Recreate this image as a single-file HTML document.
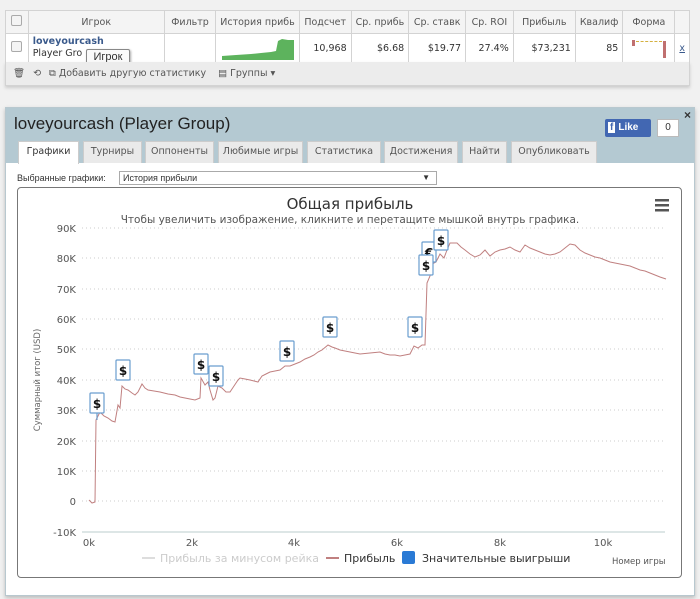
<!DOCTYPE html>
<html><head><meta charset="utf-8"><style>
*{box-sizing:border-box}
body{margin:0;width:700px;height:599px;background:#f1f1f1;font-family:"Liberation Sans",sans-serif;position:relative;overflow:hidden;color:#333}
.a{position:absolute}
table{border-collapse:collapse;font-size:10px;position:absolute;left:5px;top:10px;width:685px;background:#fff}
td{border:1px solid #d3d3d3;padding:0 4px;white-space:nowrap;overflow:hidden;font-family:"DejaVu Sans",sans-serif;font-size:9.5px}
tr.h td{height:23px;background:#f4f4f4;color:#555;text-align:center}
tr.d td{height:29px;text-align:right;color:#333}
.cb{width:11px;height:11px;border:1px solid #aaa;border-radius:2px;background:#f4f4f4;display:inline-block}
.tab{position:absolute;top:141px;height:22px;background:#eaeaea;border:1px solid #ccc;border-bottom:none;font-size:9.5px;font-family:"DejaVu Sans",sans-serif;color:#555;text-align:center;line-height:20px}
</style></head><body>
<table>
<tr class="h"><td style="width:23px"><span class="cb"></span></td><td style="width:142px">Игрок</td><td style="width:52px">Фильтр</td><td style="width:83px">История прибь</td><td style="width:52px">Подсчет</td><td style="width:53px">Ср. прибь</td><td style="width:57px">Ср. ставк</td><td style="width:48px">Ср. ROI</td><td style="width:63px">Прибыль</td><td style="width:44px">Квалиф</td><td style="width:53px">Форма</td><td></td></tr>
<tr class="d"><td style="text-align:center"><span class="cb"></span></td><td style="text-align:left;line-height:12px"><b style="color:#3a5a8c">loveyourcash</b><br>Player Gro</td><td></td><td style="position:relative"><svg width="83" height="29" style="position:absolute;left:0;top:0"><polygon fill="#5db35d" points="6,26 6,22 20,21 35,20 45,19 55,18 60,17 62,7 66,5 72,6 78,6 78,26"/></svg></td><td>10,968</td><td>$6.68</td><td>$19.77</td><td>27.4%</td><td>$73,231</td><td>85</td><td style="position:relative"><div class="a" style="left:9px;top:6px;width:3px;height:6px;background:#c07070"></div><div class="a" style="left:13px;top:7px;width:26px;border-top:1px dashed #d4b040"></div><div class="a" style="left:40px;top:7px;width:3px;height:17px;background:#c07070"></div></td><td style="text-align:center;color:#3a5a8c;text-decoration:underline">x</td></tr>
</table>
<div class="a" style="left:86px;top:49px;width:44px;height:17px;border:1px solid #888;background:#fafafa;font-size:11px;line-height:15px;text-align:center;border-radius:2px;box-shadow:1px 1px 2px #aaa">Игрок</div>
<div class="a" style="left:5px;top:62px;width:685px;height:24px;background:#ececec;border:1px solid #d3d3d3;border-top:none;font-size:9.5px;font-family:'DejaVu Sans',sans-serif;color:#555;line-height:24px;box-shadow:0 2px 3px #ccc">
<span style="margin-left:7px">🗑</span><span style="margin-left:8px">⟲</span><span style="margin-left:8px">⧉ Добавить другую статистику</span><span style="margin-left:12px">▤ Группы ▾</span></div>

<div class="a" style="left:5px;top:107px;width:690px;height:489px;background:#fff;border:1px solid #b8c8cf;box-shadow:0 2px 4px #bbb"></div>
<div class="a" style="left:6px;top:108px;width:688px;height:55px;background:#b4c9d2"></div>
<div class="a" style="left:14px;top:114px;font-size:17px;color:#222">loveyourcash (Player Group)</div>
<div class="a" style="left:605px;top:119px;width:46px;height:18px;background:#4267b2;color:#fff;font-size:10px;font-weight:bold;line-height:18px;border-radius:2px"><span style="background:#fff;color:#4267b2;padding:0 2px;margin:0 3px">f</span>Like</div>
<div class="a" style="left:657px;top:119px;width:22px;height:18px;background:#fff;border:1px solid #bbb;font-size:10px;text-align:center;line-height:16px">0</div>
<div class="a" style="left:684px;top:108px;font-size:12px;font-weight:bold">×</div>
<div class="tab" style="left:18px;width:61px;background:#fff;height:23px;color:#333">Графики</div>
<div class="tab" style="left:83px;width:59px">Турниры</div>
<div class="tab" style="left:145px;width:69px">Оппоненты</div>
<div class="tab" style="left:218px;width:85px">Любимые игры</div>
<div class="tab" style="left:307px;width:74px">Статистика</div>
<div class="tab" style="left:384px;width:74px">Достижения</div>
<div class="tab" style="left:462px;width:45px">Найти</div>
<div class="tab" style="left:511px;width:86px">Опубликовать</div>
<div class="a" style="left:17px;top:173px;font-size:9px;font-family:'Liberation Sans',sans-serif">Выбранные графики:</div>
<div class="a" style="left:119px;top:171px;width:318px;height:14px;border:1px solid #aaa;font-size:9px;font-family:'Liberation Sans',sans-serif;line-height:12px;padding-left:3px;background:#fff">История прибыли<span style="position:absolute;right:6px;font-size:8px">▼</span></div>
<div class="a" style="left:17px;top:187px;width:665px;height:391px;border:1px solid #777;border-radius:4px"></div>
<svg class="a" style="left:0;top:0" width="700" height="599" font-family="DejaVu Sans,sans-serif">
<text x="350" y="209" font-size="15" text-anchor="middle" fill="#333">Общая прибыль</text>
<text x="350" y="223" font-size="10.5" text-anchor="middle" fill="#555">Чтобы увеличить изображение, кликните и перетащите мышкой внутрь графика.</text>
<g fill="#555"><rect x="655" y="199" width="14" height="2.5"/><rect x="655" y="204" width="14" height="2.5"/><rect x="655" y="209" width="14" height="2.5"/></g>
<g stroke="#ccc" stroke-dasharray="1,3">
<line x1="82" x2="665" y1="228" y2="228"/><line x1="82" x2="665" y1="258" y2="258"/><line x1="82" x2="665" y1="289" y2="289"/><line x1="82" x2="665" y1="319" y2="319"/><line x1="82" x2="665" y1="349" y2="349"/><line x1="82" x2="665" y1="380" y2="380"/><line x1="82" x2="665" y1="410" y2="410"/><line x1="82" x2="665" y1="441" y2="441"/><line x1="82" x2="665" y1="471" y2="471"/><line x1="82" x2="665" y1="501" y2="501"/></g>
<line x1="82" x2="665" y1="532" y2="532" stroke="#bcc"/>
<g font-size="10" fill="#555" text-anchor="end">
<text x="76" y="232">90K</text><text x="76" y="262">80K</text><text x="76" y="293">70K</text><text x="76" y="323">60K</text><text x="76" y="353">50K</text><text x="76" y="384">40K</text><text x="76" y="414">30K</text><text x="76" y="445">20K</text><text x="76" y="475">10K</text><text x="76" y="505">0</text><text x="76" y="536">-10K</text></g>
<g font-size="10" fill="#555" text-anchor="middle">
<text x="89" y="546">0k</text><text x="192" y="546">2k</text><text x="294" y="546">4k</text><text x="397" y="546">6k</text><text x="500" y="546">8k</text><text x="603" y="546">10k</text></g>
<text transform="translate(40,380) rotate(-90)" font-size="8.5" fill="#666" text-anchor="middle">Суммарный итог (USD)</text>
<polyline fill="none" stroke="#c08080" stroke-width="1" points="89,500 92,503 95,502 96,420 100,412 104,416 108,418 112,421 115,422 118,405 120,408 122,386 125,389 128,390 132,393 135,395 138,392 142,384 145,388 148,390 154,391 160,392 168,394 175,395 180,397 185,398 190,399 195,400 200,398 201,378 205,385 208,382 210,390 213,400 215,398 218,386 222,388 226,392 230,392 234,386 238,380 240,378 245,379 250,380 254,381 258,382 262,376 266,374 270,372 275,371 280,370 285,366 290,366 295,364 300,362 305,359 310,357 314,355 318,352 322,350 328,345 332,347 335,348 340,350 345,351 350,352 355,353 360,354 370,353 380,352 385,354 390,355 395,355 400,356 405,355 410,354 414,346 418,348 422,345 425,345 427,283 430,276 432,264 436,262 440,254 444,258 447,250 450,243 457,243 461,247 465,250 470,254 475,257 480,255 485,250 490,256 495,252 500,250 505,249 510,247 515,250 520,252 525,245 530,248 535,250 540,252 545,254 550,255 555,254 560,252 565,248 570,244 575,245 580,250 585,253 590,255 595,257 600,258 605,260 610,262 615,263 620,264 625,265 630,266 635,268 640,270 645,271 650,273 655,275 660,277 666,279"/>
<g fill="#fff" stroke="#6a9ecf" stroke-width="1.2" font-size="12" font-weight="bold">
<g><line x1="97" y1="413" x2="97" y2="420" stroke="#6a9ecf"/><rect x="90" y="393" width="14" height="20" rx="1"/><text x="97" y="408" fill="#111" stroke="none" text-anchor="middle">$</text></g>
<g><rect x="116" y="360" width="14" height="20" rx="1"/><text x="123" y="375" fill="#111" stroke="none" text-anchor="middle">$</text></g>
<g><rect x="194" y="354" width="14" height="20" rx="1"/><text x="201" y="369" fill="#111" stroke="none" text-anchor="middle">$</text></g>
<g><rect x="209" y="366" width="14" height="20" rx="1"/><text x="216" y="381" fill="#111" stroke="none" text-anchor="middle">$</text></g>
<g><rect x="280" y="341" width="14" height="20" rx="1"/><text x="287" y="356" fill="#111" stroke="none" text-anchor="middle">$</text></g>
<g><rect x="323" y="317" width="14" height="20" rx="1"/><text x="330" y="332" fill="#111" stroke="none" text-anchor="middle">$</text></g>
<g><rect x="408" y="317" width="14" height="20" rx="1"/><text x="415" y="332" fill="#111" stroke="none" text-anchor="middle">$</text></g>
<g><rect x="422" y="242" width="14" height="20" rx="1"/><text x="429" y="257" fill="#111" stroke="none" text-anchor="middle">€</text></g>
<g><rect x="419" y="255" width="14" height="20" rx="1"/><text x="426" y="270" fill="#111" stroke="none" text-anchor="middle">$</text></g>
<g><rect x="434" y="230" width="14" height="20" rx="1"/><text x="441" y="245" fill="#111" stroke="none" text-anchor="middle">$</text></g>
</g>
<g font-size="11">
<line x1="142" x2="155" y1="558" y2="558" stroke="#ddd" stroke-width="2"/><text x="160" y="562" fill="#ccc">Прибыль за минусом рейка</text>
<line x1="326" x2="339" y1="558" y2="558" stroke="#c08080" stroke-width="2"/><text x="344" y="562" fill="#333">Прибыль</text>
<rect x="402" y="551" width="13" height="13" rx="2" fill="#2a7ad5"/><text x="422" y="562" fill="#333">Значительные выигрыши</text>
<text x="612" y="564" font-size="8.5" fill="#555">Номер игры</text></g>
</svg>
</body></html>
